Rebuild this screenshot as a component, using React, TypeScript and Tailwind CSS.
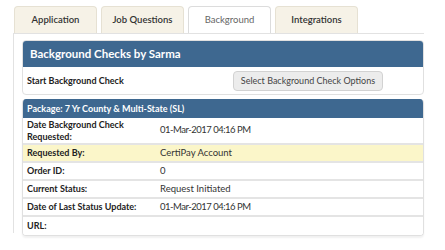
import React from "react";

const tabs = [
  { label: "Application", active: false },
  { label: "Job Questions", active: false },
  { label: "Background", active: true },
  { label: "Integrations", active: false },
];

const rows = [
  { label: "Date Background Check Requested:", value: "01-Mar-2017 04:16 PM", tall: true, date: true },
  { label: "Requested By:", value: "CertiPay Account", highlight: true },
  { label: "Order ID:", value: "0" },
  { label: "Current Status:", value: "Request Initiated" },
  { label: "Date of Last Status Update:", value: "01-Mar-2017 04:16 PM", date: true },
  { label: "URL:", value: "" },
];

export default function App() {
  return (
    <div
      className="w-[445px] h-[250px] bg-white text-[#222] overflow-hidden"
      style={{ fontFamily: "Lato, 'Open Sans', sans-serif" }}
    >
      <div className="flex gap-[4px] pl-[14px] pt-[6px]">
        {tabs.map((t) => (
          <div
            key={t.label}
            className={`w-[83px] h-[27px] flex items-center justify-center rounded-t-[4px] border border-b-0 text-[9.5px] ${
              t.active ? "bg-white border-[#dcdcdc] text-[#666] -mb-px relative z-10" : "bg-[#f6f2e7] border-[#e6e1d3] text-[#333] font-semibold"
            }`}
          >
            {t.label}
          </div>
        ))}
      </div>

      <div className="ml-[13px] w-[411px] border-l border-t border-[#e2e2e2] pl-[8px] pt-[6px] h-[200px]">
        <div className="w-[402px] rounded-[4px] border border-[#e0e0e0] overflow-hidden">
          <div className="h-[26px] bg-[#3e6890] flex items-center pl-[7px] text-white font-bold text-[11.5px]">
            Background Checks by Sarma
          </div>
          <div className="h-[27px] flex items-center pl-[4px] text-[9px] font-bold">
            <div className="w-[206px]">Start Background Check</div>
            <button className="h-[20px] w-[150px] rounded-[4px] border border-[#d2d2d2] bg-[#ececec] text-[#444] text-[9px] font-normal whitespace-nowrap">
              Select Background Check Options
            </button>
          </div>
        </div>

        <div className="mt-[4px] w-[402px] rounded-[4px] border border-[#e0e0e0] border-t-0 overflow-hidden shadow-[0_2px_2px_rgba(0,0,0,0.06)]">
          <div className="h-[19px] bg-[#3e6890] flex items-center pl-[4px] text-white font-bold text-[9px]">
            Package: 7 Yr County &amp; Multi-State (SL)
          </div>
          {rows.map((r, i) => (
            <div
              key={r.label}
              className={`flex items-center pl-[4px] ${r.tall ? "h-[27px]" : "h-[18px]"} ${
                i < rows.length - 1 ? "border-b-2 border-[#e4e4e4]" : ""
              } ${r.highlight ? "bg-[#fbf6c9]" : "bg-white"}`}
            >
              <div className="w-[133px] font-bold leading-[12px] pr-[20px] text-[9px]">{r.label}</div>
              <div className={`text-[#333] text-[9.5px] ${r.date ? "tracking-[-0.5px]" : ""}`}>{r.value}</div>
            </div>
          ))}
        </div>
      </div>
    </div>
  );
}
